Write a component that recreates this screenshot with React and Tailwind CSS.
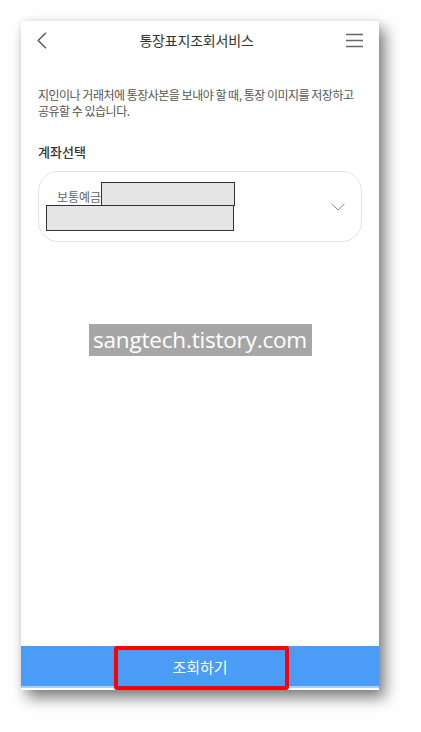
import React from 'react';

const font = { fontFamily: '"Noto Sans CJK KR", "Noto Sans", sans-serif' };

const BackIcon = () => (
    <svg width="10" height="17" viewBox="0 0 10 17" fill="none">
        <path d="M9 0.8 L1.2 8.5 L9 16.2" stroke="#555" strokeWidth="1.4" />
    </svg>
);

const MenuIcon = () => (
    <svg width="17" height="15" viewBox="0 0 17 15" fill="none">
        <path d="M0 1.5 H17 M0 7.5 H17 M0 13.5 H17" stroke="#666" strokeWidth="1.5" />
    </svg>
);

const ChevronDown = () => (
    <svg width="14" height="8" viewBox="0 0 14 8" fill="none">
        <path d="M0.5 0.8 L7 7 L13.5 0.8" stroke="#888" strokeWidth="1" />
    </svg>
);

const App = () => {
    return (
        <div className="w-[421px] h-[732px] bg-white pl-[21px] pt-[21px]" style={font}>
            <div className="w-[358px] h-[669px] bg-white flex flex-col shadow-[6px_8px_14px_rgba(0,0,0,0.5),0_0_6px_rgba(0,0,0,0.08)]">
                <div className="h-[38px] flex items-center justify-between pl-[16px] pr-[16px]">
                    <BackIcon />
                    <span className="text-[14px] text-[#333] tracking-[-0.2px]">통장표지조회서비스</span>
                    <MenuIcon />
                </div>

                <div className="px-[17px] flex flex-col flex-1">
                    <p className="mt-[28px] text-[12px] leading-[16px] text-[#555] tracking-[-0.5px] whitespace-nowrap">
                        지인이나 거래처에 통장사본을 보내야 할 때, 통장 이미지를 저장하고<br />
                        공유할 수 있습니다.
                    </p>
                    <h3 className="mt-[24px] text-[13px] leading-[18px] font-medium text-[#333]">계좌선택</h3>
                    <div className="mt-[10px] h-[71px] w-[324px] rounded-[20px] border border-[#e3e3e3] flex items-center justify-between pr-[16px]">
                        <div className="flex flex-col">
                            <div className="flex items-end pl-[18px]">
                                <span className="text-[12px] leading-[16px] text-[#666] mb-[1px]">보통예금</span>
                                <div className="w-[134px] h-[24px] bg-[#e5e5e5] border border-[#333]"></div>
                            </div>
                            <div className="ml-[7px] -mt-px w-[188px] h-[26px] bg-[#e5e5e5] border border-[#333]"></div>
                        </div>
                        <ChevronDown />
                    </div>

                    <div className="mt-[82px] self-center w-[223px] h-[32px] bg-[#a6a6a6] flex items-center justify-center">
                        <span className="text-white text-[22.5px] leading-none tracking-[-0.2px]" style={{ fontFamily: '"Open Sans", sans-serif' }}>
                            sangtech.tistory.com
                        </span>
                    </div>
                </div>

                <div className="relative">
                    <div className="h-[40px] bg-[#4b9cf7] flex items-center justify-center">
                        <span className="text-white text-[15px] leading-none">조회하기</span>
                    </div>
                    <div className="h-[2px] bg-[#a9d0fb]"></div>
                    <div className="h-[2px] bg-white"></div>
                    <div className="absolute left-[93px] top-0 w-[175px] h-[44px] border-4 border-[#ff0000] rounded-[3px]"></div>
                </div>
            </div>
        </div>
    );
};

export default App;
